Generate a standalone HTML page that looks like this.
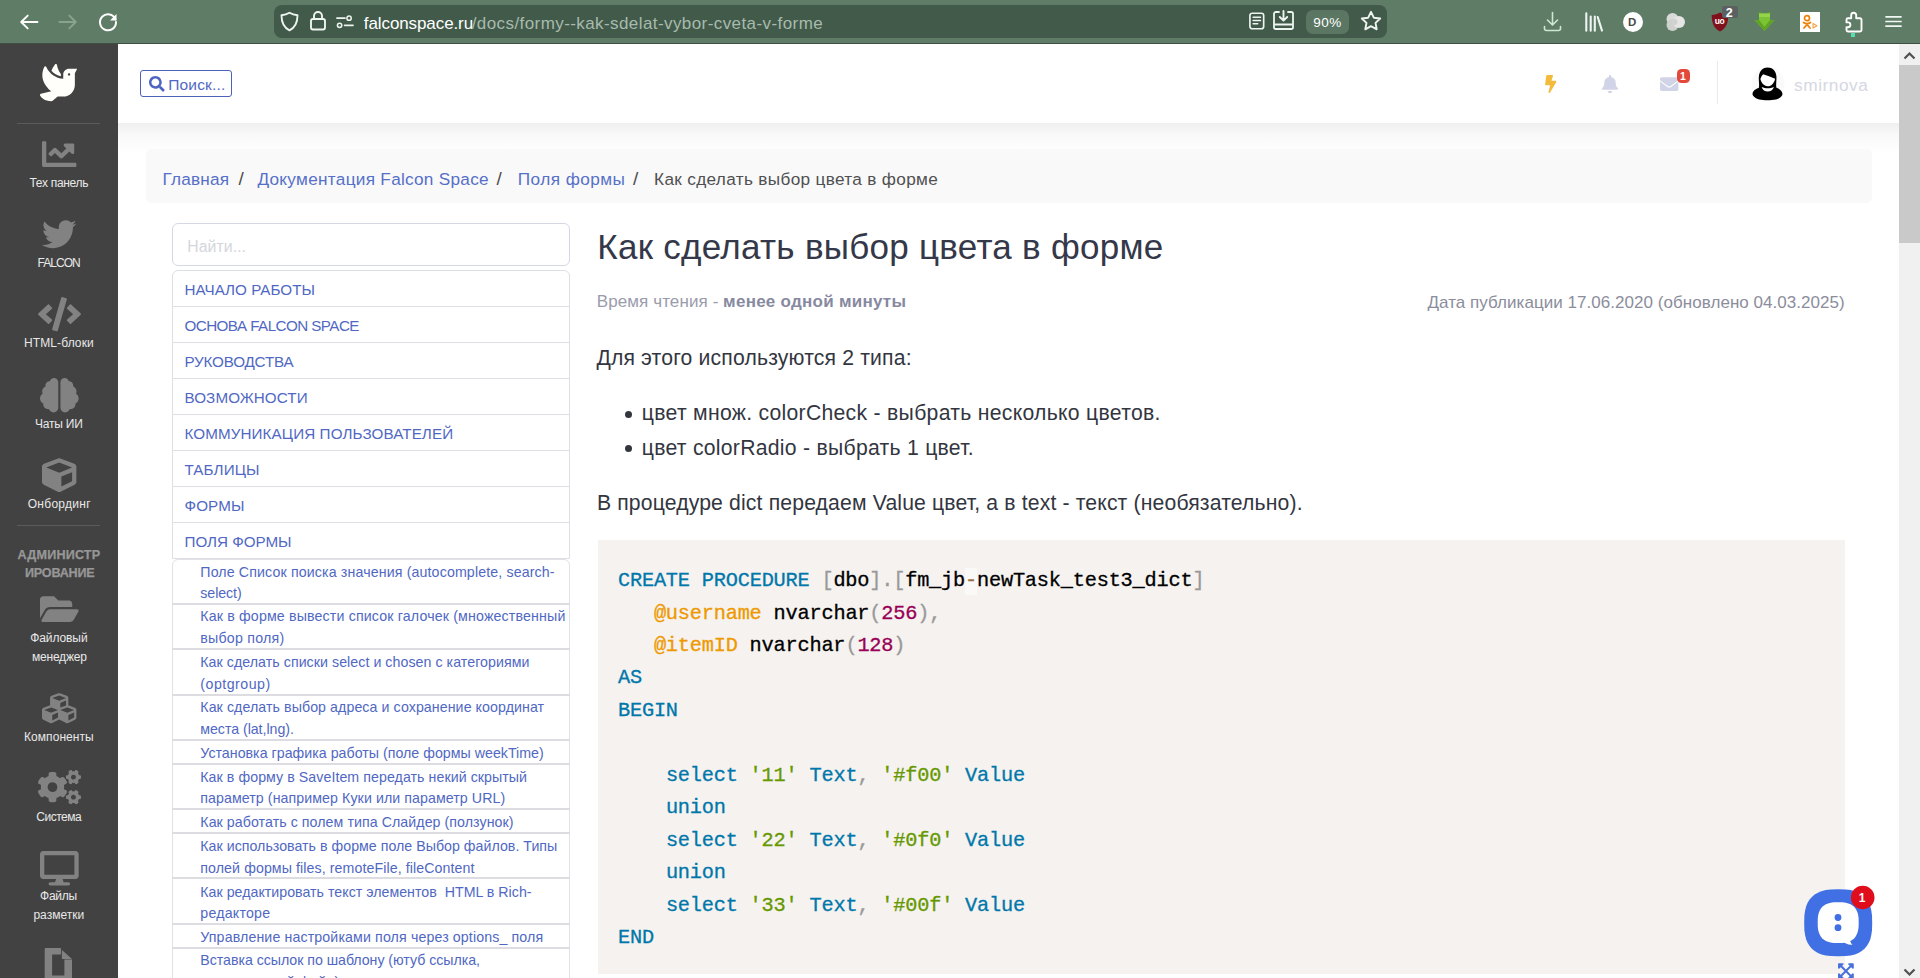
<!DOCTYPE html>
<html lang="ru">
<head>
<meta charset="utf-8">
<title>Как сделать выбор цвета в форме</title>
<style>
*{box-sizing:border-box}
html,body{margin:0;padding:0}
body{width:1920px;height:978px;overflow:hidden;position:relative;background:#fff;
 font-family:"Liberation Sans",sans-serif;color:#333}
.t{position:absolute;white-space:pre;margin:0;padding:0;font-weight:400;text-decoration:none;display:block}
.ic{position:absolute;display:block;overflow:visible}
a{text-decoration:none;color:inherit}
ul,ol,li,h1,p,nav,header,pre,code{margin:0;padding:0;list-style:none;font:inherit}
.abs{position:absolute}
.w{position:static;display:block;margin:0;padding:0}
/* browser chrome */
#chrome{position:absolute;left:0;top:0;width:1920px;height:44px;background:#5e7c66;border-bottom:1px solid #3c4f41}
#urlbar{position:absolute;left:274px;top:5px;width:1113px;height:33px;border-radius:8px;background:#425a4a}
#zoom{position:absolute;left:1306px;top:10px;width:43px;height:24px;border-radius:7px;background:#5b7764}
.url1{color:#fff}.url2{color:#a7bbad}
/* sidebar */
#side{position:absolute;left:0;top:44px;width:118px;height:934px;background:#424242}
.sl{color:#e8e8e8}
.sh{color:#979797;font-weight:700;-webkit-text-stroke:.25px currentColor}
.hr{position:absolute;left:17px;width:83px;height:1px;background:#5b5b5b}
/* top header */
#top{position:absolute;left:118px;top:44px;width:1781px;height:79px;background:#fff}
#topshadow{position:absolute;left:118px;top:123px;width:1781px;height:30px;background:linear-gradient(#efeff0,#f8f8f9 35%,#fff)}
#sbtn{position:absolute;left:140px;top:70px;width:92px;height:27px;border:1px solid #4c62b6;border-radius:3px;background:#fff}
.blue{color:#5068c3}
#vdiv{position:absolute;left:1717px;top:61px;width:1px;height:43px;background:#e9eaef}
#badge{position:absolute;left:1677px;top:69px;width:13px;height:13.500px;border-radius:4.500px;background:#e2493a}
.uname{color:#d5d7e3}
/* scrollbar */
#sb{position:absolute;left:1899px;top:44px;width:21px;height:934px;background:#f0f0f0}
#sbthumb{position:absolute;left:1899px;top:65px;width:21px;height:178px;background:#c9c9c9}
/* breadcrumb */
#bc{position:absolute;left:146px;top:149px;width:1726px;height:54px;border-radius:5px;background:#f9f9fa}
.bcl{color:#5670c7}.bcs{color:#4d4d4d}.bcc{color:#505050}
/* doc menu */
#find{position:absolute;left:172px;top:223px;width:398px;height:43px;border:1px solid #d5d8e3;border-radius:6px;background:#fff}
.ph{color:#d4d6dd}
#menu{position:absolute;left:172px;top:270px;width:398px;height:289px;border:1px solid #dedfe4;border-radius:6px 6px 0 0;background:#fff}
.mi{position:absolute;left:172px;width:398px;height:1px;background:#dedfe4}
#sub{position:absolute;left:172px;top:559px;width:398px;height:430px;border:1px solid #e1e1e6;border-radius:6px 6px 0 0;background:#fff}
.si{position:absolute;left:172px;width:398px;height:2px;background:#dddde1}
/* article */
.h1{color:#343849}
.meta{color:#9a9cab}.metab{color:#8789a0;font-weight:700}.date{color:#8b8d9c}
.p{color:#33363f}
.dot{position:absolute;width:7px;height:7px;border-radius:50%;background:#33363f}
#code{position:absolute;left:597.5px;top:540px;width:1247px;height:434px;background:#f5f2f0}
.c{font-family:"Liberation Mono",monospace;color:#000;-webkit-text-stroke:.3px currentColor}
.k{color:#0077aa}.pn{color:#999}.v{color:#ee9900}.n{color:#990055}.s{color:#669900}.o{color:#9a6e3a;background:rgba(255,255,255,.5)}
</style>
</head>
<body>
<div id="chrome">
<div id="urlbar"></div>
<div id="zoom"></div>
<svg class="ic" style="left:17.500px;top:11.200px" width="22" height="22" viewBox="0 0 22 22"><path d="M19.500 11H3.500M9.700 4.600L3.200 11l6.500 6.400" fill="none" stroke="#fff" stroke-width="1.900" stroke-linecap="round" stroke-linejoin="round"/></svg>
<svg class="ic" style="left:57px;top:11.200px" width="22" height="22" viewBox="0 0 22 22"><path d="M2.500 11h15.500M12.300 4.600l6.500 6.400-6.500 6.400" fill="none" stroke="#8aa390" stroke-width="1.900" stroke-linecap="round" stroke-linejoin="round"/></svg>
<svg class="ic" style="left:97px;top:11px" width="22" height="22" viewBox="0 0 22 22"><path d="M18.500 8.500A8 8 0 1 0 19 11" fill="none" stroke="#fff" stroke-width="2" stroke-linecap="round"/><path d="M19.500 3v6.500H13z" fill="#fff"/></svg>
<svg class="ic" style="left:279px;top:11px" width="21" height="21" viewBox="0 0 21 21"><path d="M10.500 1.800c2.500 1.600 5 2.300 8 2.500 0 7-2.500 12.500-8 15-5.500-2.500-8-8-8-15 3-.2 5.500-.9 8-2.500z" fill="none" stroke="#eef4ef" stroke-width="1.900" stroke-linejoin="round"/></svg>
<svg class="ic" style="left:309px;top:10px" width="18" height="21" viewBox="0 0 18 21"><rect x="2" y="9" width="14" height="10.500" rx="2" fill="none" stroke="#eef4ef" stroke-width="1.900"/><path d="M5 9V6a4 4 0 0 1 8 0v3" fill="none" stroke="#eef4ef" stroke-width="1.900"/></svg>
<svg class="ic" style="left:336px;top:15px" width="18" height="13.500" viewBox="0 0 20 15"><path d="M1 3.500h9M9.500 11.500h9.500" stroke="#eef4ef" stroke-width="1.800" stroke-linecap="round"/><circle cx="14.500" cy="3.500" r="2.400" fill="none" stroke="#eef4ef" stroke-width="1.700"/><circle cx="4" cy="11.500" r="2.400" fill="none" stroke="#eef4ef" stroke-width="1.700"/></svg>
<span class="t url1" style="left:363.8px;top:12.7px;font-size:17px;line-height:22.1px;letter-spacing:-0.094px;">falconspace.ru</span><span class="t url2" style="left:471.7px;top:12.7px;font-size:17px;line-height:22.1px;letter-spacing:0.417px;">/docs/formy--kak-sdelat-vybor-cveta-v-forme</span>
<svg class="ic" style="left:1249px;top:11.500px" width="15.600" height="18" viewBox="0 0 17 19"><rect x="1" y="1" width="15" height="17" rx="2.500" fill="none" stroke="#eef4ef" stroke-width="1.800"/><path d="M4.500 5.500h8M4.500 9h8M4.500 12.500h5" stroke="#eef4ef" stroke-width="1.700" stroke-linecap="round"/></svg>
<svg class="ic" style="left:1273px;top:10px" width="21" height="20" viewBox="0 0 21 20"><path d="M6 2H2.800a1.800 1.800 0 0 0-1.800 1.800v13.400A1.800 1.800 0 0 0 2.800 19h15.400a1.800 1.800 0 0 0 1.800-1.800V3.800A1.800 1.800 0 0 0 18.200 2H15M1.500 14.500h18" fill="none" stroke="#eef4ef" stroke-width="1.800" stroke-linecap="round"/><path d="M10.500 1v9.500M6.800 7l3.700 3.700L14.200 7" fill="none" stroke="#eef4ef" stroke-width="1.900" stroke-linecap="round" stroke-linejoin="round"/></svg>
<span class="t url1" style="left:1313.3px;top:14.0px;font-size:13.5px;line-height:17.6px;letter-spacing:0.449px;">90%</span><svg class="ic" style="left:1360px;top:10px" width="22" height="21" viewBox="0 0 22 21"><path d="M11 1.800l2.800 5.900 6.400.8-4.700 4.400 1.200 6.400L11 16.200l-5.700 3.100 1.200-6.400L1.800 8.500l6.400-.8z" fill="none" stroke="#eef4ef" stroke-width="1.900" stroke-linejoin="round"/></svg>
<svg class="ic" style="left:1543px;top:11px" width="19" height="21" viewBox="0 0 19 21"><path d="M9.500 1.500v12M4.500 9l5 5 5-5M1.500 15.500v2a2 2 0 0 0 2 2h12a2 2 0 0 0 2-2v-2" fill="none" stroke="#cfe6d5" stroke-width="1.600" stroke-linecap="round" stroke-linejoin="round"/></svg>
<svg class="ic" style="left:1584px;top:12px" width="20" height="20" viewBox="0 0 20 20"><path d="M2.300 1.200v17.600M6.700 4.500v14.300M10.800 4.500v14.300M13.700 5l4.300 13.600" fill="none" stroke="#eef4ef" stroke-width="2.100" stroke-linecap="round"/></svg>
<div class="abs" style="left:1623px;top:12px;width:20px;height:20px;border-radius:50%;background:#fff"></div><span class="t" style="left:1628.1px;top:15.0px;font-size:11.5px;line-height:15.0px;color:#4a4a4a;font-weight:700">D</span><svg class="ic" style="left:1665px;top:12px" width="21" height="20" viewBox="0 0 21 20"><circle cx="7.500" cy="7" r="6" fill="#d9dbd9"/><circle cx="7.500" cy="13" r="6" fill="#cfd1cf"/><circle cx="14" cy="10" r="6" fill="#e4e5e4"/><circle cx="9.500" cy="10" r="3" fill="#d0d2d0"/></svg>
<svg class="ic" style="left:1711px;top:12px" width="18" height="20" viewBox="0 0 18 20"><path d="M9 .5c2.500 1.500 5 2.200 8.300 2.500 0 8-2.300 13.500-8.300 16.500C3 16.500.7 11 .7 3 4 2.700 6.500 2 9 .5z" fill="#80101c"/></svg><span class="t" style="left:1714.7px;top:16.3px;font-size:8.5px;line-height:11.1px;color:#fff;font-weight:700;letter-spacing:-0.3px">uo</span><div class="abs" style="left:1722px;top:6px;width:16px;height:12px;border-radius:2px;background:#5b6163"></div><span class="t" style="left:1725.8px;top:5.1px;font-size:12.5px;line-height:16.2px;color:#fff;font-weight:700">2</span>
<svg class="ic" style="left:1754px;top:11px" width="21" height="21" viewBox="0 0 21 21"><path d="M4.500 1h3v2h-3zM13.500 1h3v2h-3z" fill="#5a9a28"/><path d="M5 2.500h11V9h4.500L10.500 20 .5 9H5z" fill="#7cc235"/><path d="M5 2.500h11V6H5z" fill="#94d44a"/><path d="M.5 9H5v0l5.500 7 5.500-7h4.500L10.500 20z" fill="#5fa524"/></svg>
<div class="abs" style="left:1800px;top:12px;width:20px;height:20px;background:#fff"></div><svg class="ic" style="left:1800px;top:12px" width="20" height="20" viewBox="0 0 20 20"><circle cx="7" cy="6.200" r="2.500" fill="none" stroke="#ee8208" stroke-width="1.700"/><path d="M3.500 10.500c2.300 1.700 4.700 1.700 7 0M7 12v1M7 12.500l-3 3.500M7 12.500l3 3.500" fill="none" stroke="#ee8208" stroke-width="1.800" stroke-linecap="round"/><path d="M13 11.500l4 2.300-4 2.300z" fill="none" stroke="#f4a04a" stroke-width="1.100" stroke-linejoin="round"/></svg>
<svg class="ic" style="left:1844px;top:11px" width="19" height="22" viewBox="0 0 19 22"><path d="M7.200 7.200V4.300a2.500 2.500 0 0 1 5 0v2.900H16a1.500 1.500 0 0 1 1.500 1.500V19a1.500 1.500 0 0 1-1.500 1.500H4A1.500 1.500 0 0 1 2.500 19v-2.800H4a2.400 2.400 0 0 0 0-4.800H2.500V8.700A1.500 1.500 0 0 1 4 7.200z" fill="none" stroke="#fff" stroke-width="1.900" stroke-linejoin="round"/></svg><div class="abs" style="left:1850.500px;top:33px;width:4.500px;height:4px;background:#54e0b0"></div>
<svg class="ic" style="left:1885px;top:15px" width="17" height="14" viewBox="0 0 17 14"><path d="M1 1.800h15M1 6.500h15M1 11.200h15" stroke="#f2f7f3" stroke-width="1.700" stroke-linecap="round"/></svg>
</div>
<div id="side"></div>
<nav class="w">
<svg class="ic" style="left:39.6px;top:64px" width="37.2" height="37.2" viewBox="0 0 512 512" ><path fill="#fffefb" d="M288 167.2v-28.1c-28.2-36.300-47.100-79.300-54.100-125.200-2.100-13.500-19-18.800-27.800-8.300-21.100 24.900-37.700 54.100-48.900 86.500 34.200 38.300 80 64.600 130.800 75.100zM400 64c-44.200 0-80 35.900-80 80.100v59.400C215.600 197.300 127 133 87 41.800c-5.500-12.500-23.200-13.200-29-.9C41.400 76 32 115.200 32 156.600c0 70.800 34.100 136.900 85.100 185.900 13.200 12.700 26.100 23.200 38.900 32.800l-143.900 36C1.400 414-3.400 426.400 2.600 435.700 20 462.600 63 508.200 155.800 512c8 .3 16-2.600 22.100-7.900l65.200-56.100H320c88.400 0 160-71.500 160-159.900V128l32-64H400zm0 96.100c-8.800 0-16-7.200-16-16s7.200-16 16-16 16 7.200 16 16-7.200 16-16 16z"/></svg><div class="hr" style="top:123px"></div>
<svg class="ic" style="left:42px;top:137px" width="34.4" height="34.4" viewBox="0 0 512 512" ><path fill="#828282" d="M496 384H64V80c0-8.840-7.160-16-16-16H16C7.160 64 0 71.160 0 80v336c0 17.670 14.330 32 32 32h464c8.840 0 16-7.160 16-16v-32c0-8.840-7.160-16-16-16zM464 96H345.940c-21.380 0-32.090 25.850-16.970 40.970l32.400 32.400L288 242.750l-73.370-73.370c-12.500-12.500-32.760-12.500-45.250 0l-68.690 68.690c-6.250 6.250-6.250 16.380 0 22.630l22.620 22.620c6.250 6.250 16.380 6.250 22.630 0L192 237.250l73.370 73.370c12.500 12.500 32.760 12.500 45.250 0l96-96 32.400 32.400c15.120 15.120 40.970 4.410 40.970-16.970V112c.010-8.840-7.150-16-15.990-16z"/></svg>
<a class="t sl" style="left:29.5px;top:175.9px;font-size:12px;line-height:15.6px;letter-spacing:-0.303px;">Тех панель</a><svg class="ic" style="left:41.5px;top:217px" width="34.4" height="34.4" viewBox="0 0 512 512" ><path fill="#828282" d="M459.37 151.716c.325 4.548.325 9.097.325 13.645 0 138.720-105.583 298.558-298.558 298.558-59.452 0-114.680-17.219-161.137-47.106 8.447.974 16.568 1.299 25.340 1.299 49.055 0 94.213-16.568 130.274-44.832-46.132-.975-84.792-31.188-98.112-72.772 6.498.974 12.995 1.624 19.818 1.624 9.421 0 18.843-1.300 27.614-3.573-48.081-9.747-84.143-51.980-84.143-102.985v-1.299c13.969 7.797 30.214 12.670 47.431 13.319-28.264-18.843-46.781-51.005-46.781-87.391 0-19.492 5.197-37.360 14.294-52.954 51.655 63.675 129.300 105.258 216.365 109.807-1.624-7.797-2.599-15.918-2.599-24.040 0-57.828 46.782-104.934 104.934-104.934 30.213 0 57.502 12.670 76.670 33.137 23.715-4.548 46.456-13.320 66.599-25.340-7.798 24.366-24.366 44.833-46.132 57.827 21.117-2.273 41.584-8.122 60.426-16.243-14.292 20.791-32.161 39.308-52.628 54.253z"/></svg>
<a class="t sl" style="left:37.5px;top:256.2px;font-size:12px;line-height:15.6px;letter-spacing:-0.956px;">FALCON</a><svg class="ic" style="left:37.5px;top:297.2px" width="43" height="34.4" viewBox="0 0 640 512" ><path fill="#828282" d="M278.900 511.500l-61-17.700c-6.400-1.800-10-8.500-8.200-14.900L346.200 8.700c1.800-6.400 8.500-10 14.900-8.200l61 17.700c6.400 1.800 10 8.500 8.200 14.900L293.800 503.300c-1.900 6.400-8.500 10.100-14.900 8.200zm-114-112.200l43.500-46.400c4.600-4.900 4.300-12.700-.8-17.200L117 256l90.600-79.700c5.100-4.500 5.500-12.300.8-17.200l-43.500-46.400c-4.500-4.800-12.100-5.100-17-.5L3.800 247.200c-5.100 4.700-5.100 12.800 0 17.500l144.100 135.100c4.900 4.600 12.500 4.400 17-.5zm327.200.6l144.100-135.100c5.100-4.700 5.100-12.800 0-17.500L492.100 112.100c-4.800-4.500-12.400-4.300-17 .5L431.600 159c-4.600 4.900-4.300 12.700.8 17.200L523 256l-90.600 79.700c-5.100 4.500-5.500 12.300-.8 17.200l43.500 46.400c4.500 4.900 12.100 5.100 17 .6z"/></svg>
<a class="t sl" style="left:24.0px;top:336.2px;font-size:12px;line-height:15.6px;letter-spacing:0.105px;">HTML-блоки</a><svg class="ic" style="left:40.2px;top:378px" width="38.7" height="34.4" viewBox="0 0 576 512" ><path fill="#828282" d="M208 0c-29.900 0-54.700 20.500-61.800 48.200-.8 0-1.400-.2-2.200-.2-35.300 0-64 28.700-64 64 0 4.800.6 9.500 1.700 14C52.500 138 32 166.600 32 200c0 12.600 3.200 24.300 8.300 34.900C16.300 248.700 0 274.300 0 304c0 33.300 20.400 61.900 49.400 73.900-.9 4.600-1.400 9.300-1.400 14.100 0 39.800 32.200 72 72 72 4.100 0 8.100-.5 12-1.200 9.600 28.500 36.200 49.200 68 49.200 39.800 0 72-32.200 72-72V64c0-35.300-28.700-64-64-64zm368 304c0-29.700-16.300-55.300-40.300-69.100 5.200-10.600 8.300-22.300 8.300-34.900 0-33.400-20.500-62-49.700-74 1-4.500 1.700-9.200 1.700-14 0-35.300-28.700-64-64-64-.8 0-1.500.2-2.200.2C422.700 20.500 397.900 0 368 0c-35.300 0-64 28.600-64 64v376c0 39.800 32.200 72 72 72 31.800 0 58.400-20.700 68-49.200 3.900.7 7.900 1.200 12 1.200 39.800 0 72-32.200 72-72 0-4.800-.5-9.500-1.400-14.100 29-12 49.400-40.600 49.400-73.900z"/></svg>
<a class="t sl" style="left:35.1px;top:417.2px;font-size:12px;line-height:15.6px;letter-spacing:-0.241px;">Чаты ИИ</a><svg class="ic" style="left:42px;top:457.5px" width="34.4" height="34.4" viewBox="0 0 512 512" ><path fill="#828282" d="M239.100 6.300l-208 78c-18.700 7-31.100 25-31.100 45v225.100c0 18.200 10.300 34.800 26.500 42.900l208 104c13.500 6.800 29.400 6.800 42.900 0l208-104c16.300-8.100 26.500-24.800 26.500-42.900V129.300c0-20-12.400-37.900-31.100-44.900l-208-78C262 2.200 250 2.200 239.100 6.300zM256 68.400l192 72v1.100l-192 78-192-78v-1.100l192-72zm32 356V275.500l160-65v133.900l-160 80z"/></svg>
<a class="t sl" style="left:27.7px;top:496.9px;font-size:12px;line-height:15.6px;letter-spacing:0.286px;">Онбординг</a><div class="hr" style="top:525px"></div>
<span class="t sh" style="left:17.6px;top:546.6px;font-size:12.6px;line-height:16.4px;letter-spacing:0.180px;">АДМИНИСТР</span><span class="t sh" style="left:25.0px;top:564.6px;font-size:12.6px;line-height:16.4px;letter-spacing:-0.222px;">ИРОВАНИЕ</span><svg class="ic" style="left:39.8px;top:592.3px" width="38.7" height="34.4" viewBox="0 0 576 512" ><path fill="#828282" d="M572.694 292.093L500.270 416.248A63.997 63.997 0 0 1 444.989 448H45.025c-18.523 0-30.064-20.093-20.731-36.093l72.424-124.155A64 64 0 0 1 152 256h399.964c18.523 0 30.064 20.093 20.730 36.093zM152 224h328v-48c0-26.510-21.490-48-48-48H272l-64-64H48C21.490 64 0 85.490 0 112v278.046l69.077-118.418C86.214 242.250 117.989 224 152 224z"/></svg>
<a class="t sl" style="left:30.2px;top:631.4px;font-size:12px;line-height:15.6px;letter-spacing:-0.087px;">Файловый</a><a class="t sl" style="left:31.9px;top:649.8px;font-size:12px;line-height:15.6px;letter-spacing:-0.185px;">менеджер</a><svg class="ic" style="left:41.8px;top:690.5px" width="34.4" height="34.4" viewBox="0 0 512 512" ><path fill="#828282" d="M488.600 250.200L392 214V105.500c0-15-9.300-28.400-23.400-33.700l-100-37.500c-8.100-3.100-17.100-3.100-25.300 0l-100 37.500c-14.100 5.300-23.400 18.700-23.400 33.700V214l-96.600 36.200C9.300 255.500 0 268.900 0 283.900V394c0 13.600 7.700 26.100 19.900 32.200l100 50c10.100 5.100 22.100 5.100 32.200 0l103.900-52 103.900 52c10.100 5.100 22.100 5.100 32.200 0l100-50c12.200-6.100 19.900-18.600 19.900-32.200V283.900c0-15-9.300-28.400-23.400-33.700zM358 214.800l-85 31.900v-68.200l85-37v73.300zM154 104.100l102-38.200 102 38.200v.6l-102 41.400-102-41.400v-.6zm84 291.100l-85 42.500v-79.100l85-38.800v75.400zm0-112l-102 41.400-102-41.400v-.6l102-38.200 102 38.200v.6zm240 112l-85 42.500v-79.100l85-38.800v75.400zm0-112l-102 41.400-102-41.400v-.6l102-38.200 102 38.200v.6z"/></svg>
<a class="t sl" style="left:24.0px;top:729.6px;font-size:12px;line-height:15.6px;letter-spacing:0.065px;">Компоненты</a><svg class="ic" style="left:37.5px;top:770px" width="43" height="34.4" viewBox="0 0 640 512" ><path fill="#828282" d="M512.100 191l-8.200 14.300c-3 5.300-9.400 7.500-15.100 5.400-11.800-4.400-22.600-10.700-32.100-18.600-4.600-3.800-5.800-10.500-2.800-15.700l8.200-14.300c-6.900-8-12.300-17.300-15.900-27.400h-16.500c-6 0-11.200-4.300-12.200-10.300-2-12-2.100-24.600 0-37.100 1-6 6.200-10.400 12.200-10.400h16.500c3.600-10.100 9-19.400 15.900-27.400l-8.200-14.300c-3-5.200-1.900-11.900 2.800-15.700 9.500-7.900 20.400-14.200 32.100-18.600 5.700-2.100 12.100.1 15.100 5.400l8.200 14.300c10.500-1.900 21.200-1.900 31.700 0L552 6.300c3-5.300 9.400-7.500 15.100-5.400 11.800 4.400 22.600 10.700 32.100 18.600 4.600 3.800 5.800 10.500 2.800 15.700l-8.200 14.300c6.900 8 12.300 17.300 15.900 27.400h16.500c6 0 11.200 4.300 12.200 10.300 2 12 2.100 24.600 0 37.100-1 6-6.200 10.400-12.200 10.400h-16.500c-3.600 10.100-9 19.400-15.900 27.400l8.200 14.300c3 5.200 1.900 11.900-2.800 15.700-9.500 7.900-20.400 14.200-32.100 18.600-5.700 2.100-12.100-.1-15.100-5.400l-8.200-14.300c-10.400 1.900-21.200 1.900-31.700 0zm-10.500-58.800c38.500 29.600 82.400-14.300 52.800-52.800-38.500-29.700-82.400 14.300-52.800 52.800zM386.300 286.100l33.700 16.800c10.100 5.800 14.500 18.100 10.500 29.100-8.900 24.200-26.400 46.400-42.600 65.800-7.400 8.900-20.200 11.100-30.300 5.300l-29.100-16.800c-16 13.700-34.600 24.600-54.900 31.700v33.600c0 11.600-8.300 21.600-19.700 23.600-24.600 4.200-50.400 4.400-75.900 0-11.500-2-20-11.900-20-23.600V418c-20.300-7.200-38.900-18-54.900-31.700L74 403c-10 5.800-22.900 3.600-30.300-5.300-16.200-19.400-33.300-41.600-42.200-65.700-4-10.900.4-23.200 10.500-29.100l33.300-16.800c-3.900-20.900-3.900-42.400 0-63.400L12 205.800c-10.100-5.800-14.600-18.100-10.500-29 8.900-24.200 26-46.400 42.200-65.800 7.400-8.900 20.200-11.100 30.300-5.300l29.100 16.800c16-13.700 34.600-24.600 54.900-31.700V57.100c0-11.500 8.200-21.500 19.600-23.500 24.600-4.200 50.500-4.400 76-.1 11.500 2 20 11.900 20 23.600v33.600c20.300 7.200 38.900 18 54.900 31.700l29.100-16.800c10-5.800 22.900-3.600 30.300 5.300 16.200 19.400 33.200 41.600 42.100 65.800 4 10.900.1 23.200-10 29.100l-33.700 16.800c3.900 21 3.900 42.500 0 63.500zm-117.600 21.100c59.200-77-28.700-164.900-105.700-105.700-59.200 77 28.700 164.900 105.700 105.700zm243.400 182.700l-8.200 14.300c-3 5.300-9.400 7.500-15.100 5.400-11.800-4.400-22.600-10.700-32.100-18.600-4.600-3.800-5.800-10.500-2.800-15.700l8.200-14.300c-6.900-8-12.300-17.300-15.900-27.400h-16.500c-6 0-11.200-4.300-12.200-10.300-2-12-2.100-24.600 0-37.100 1-6 6.200-10.400 12.200-10.400h16.500c3.600-10.100 9-19.400 15.900-27.400l-8.200-14.300c-3-5.200-1.900-11.900 2.800-15.700 9.500-7.900 20.400-14.200 32.100-18.600 5.700-2.100 12.100.1 15.100 5.400l8.200 14.300c10.500-1.900 21.200-1.900 31.700 0l8.200-14.300c3-5.300 9.400-7.500 15.100-5.400 11.800 4.400 22.600 10.700 32.100 18.600 4.600 3.800 5.800 10.500 2.800 15.700l-8.200 14.300c6.900 8 12.300 17.300 15.900 27.400h16.500c6 0 11.200 4.300 12.200 10.300 2 12 2.100 24.600 0 37.100-1 6-6.200 10.400-12.200 10.400h-16.500c-3.600 10.100-9 19.400-15.900 27.400l8.200 14.300c3 5.200 1.900 11.900-2.800 15.700-9.500 7.900-20.400 14.200-32.100 18.600-5.700 2.100-12.100-.1-15.100-5.400l-8.200-14.300c-10.400 1.900-21.200 1.900-31.700 0zM501.600 431c38.500 29.600 82.400-14.300 52.800-52.800-38.500-29.600-82.400 14.300-52.800 52.800z"/></svg>
<a class="t sl" style="left:36.3px;top:809.6px;font-size:12px;line-height:15.6px;letter-spacing:-0.487px;">Система</a><svg class="ic" style="left:40px;top:851px" width="38.7" height="34.4" viewBox="0 0 576 512" ><path fill="#828282" d="M528 0H48C21.500 0 0 21.500 0 48v320c0 26.500 21.500 48 48 48h192l-16 48h-72c-13.300 0-24 10.700-24 24s10.700 24 24 24h272c13.300 0 24-10.700 24-24s-10.700-24-24-24h-72l-16-48h192c26.500 0 48-21.500 48-48V48c0-26.500-21.500-48-48-48zm-16 352H64V64h448v288z"/></svg>
<a class="t sl" style="left:40.0px;top:889.4px;font-size:12px;line-height:15.6px;letter-spacing:-0.240px;">Файлы</a><a class="t sl" style="left:33.4px;top:907.8px;font-size:12px;line-height:15.6px;letter-spacing:0.034px;">разметки</a><svg class="ic" style="left:44px;top:947px" width="30" height="31" viewBox="0 0 30 31"><path fill="#828282" d="M1.700 .9H16.200q.8 0 .8 .8V7.500H8.100V28.600H20.400V12.600H28V31H.7V1.900q0-1 1-1zM17.900 3.100L28 12H17.900z"/></svg>
</nav>
<div id="top"></div>
<div id="topshadow"></div>
<header class="w">
<div id="sbtn"></div><svg class="ic" style="left:148.5px;top:76px" width="15.7" height="15.7" viewBox="0 0 512 512" ><path fill="#4d65c1" d="M505 442.700L405.300 343c-4.500-4.500-10.600-7-17-7H372c27.600-35.300 44-79.700 44-128C416 93.100 322.900 0 208 0S0 93.100 0 208s93.100 208 208 208c48.300 0 92.700-16.400 128-44v16.300c0 6.400 2.500 12.500 7 17l99.700 99.700c9.400 9.400 24.600 9.400 33.900 0l28.300-28.300c9.400-9.400 9.400-24.600.1-34zM208 336c-70.700 0-128-57.200-128-128 0-70.700 57.200-128 128-128 70.700 0 128 57.200 128 128 0 70.700-57.200 128-128 128z"/></svg><a class="t blue" style="left:168.3px;top:74.7px;font-size:15.5px;line-height:20.2px;letter-spacing:0.152px;">Поиск...</a>
<svg class="ic" style="left:1545.3px;top:75.3px" width="11.5" height="18" viewBox="0 0 320 512" ><path fill="#f2bb3c" d="M296 160H180.600l42.600-129.800C227.200 15 215.700 0 200 0H56C44 0 33.800 8.900 32.200 20.800l-32 240C-1.700 275.200 9.500 288 24 288h118.700L96.600 482.500c-3.600 15.200 8 29.500 23.300 29.500 8.400 0 16.400-4.400 20.800-12l176-304c9.300-15.900-2.200-36-20.700-36z"/></svg><svg class="ic" style="left:1602.3px;top:75px" width="16" height="18.3" viewBox="0 0 448 512" ><path fill="#d1d4e6" d="M224 512c35.320 0 63.970-28.650 63.970-64H160.030c0 35.350 28.650 64 63.970 64zm215.390-149.710c-19.320-20.760-55.470-51.990-55.470-154.290 0-77.700-54.480-139.900-127.940-155.160V32c0-17.670-14.320-32-31.980-32s-31.980 14.330-31.980 32v20.840C118.560 68.100 64.080 130.300 64.080 208c0 102.300-36.150 133.530-55.470 154.290-6 6.450-8.660 14.160-8.610 21.710.11 16.400 12.980 32 32.100 32h383.800c19.120 0 32-15.600 32.100-32 .05-7.550-2.610-15.270-8.610-21.710z"/></svg><svg class="ic" style="left:1660px;top:75px" width="18.4" height="18.4" viewBox="0 0 512 512" ><path fill="#d1d4e6" d="M502.300 190.800c3.900-3.100 9.700-.2 9.700 4.700V400c0 26.500-21.500 48-48 48H48c-26.500 0-48-21.500-48-48V195.600c0-5 5.700-7.800 9.700-4.700 22.400 17.400 52.100 39.500 154.100 113.600 21.100 15.400 56.700 47.800 92.200 47.600 35.700.3 72-32.800 92.300-47.600 102-74.100 131.600-96.300 154-113.700zM256 320c23.200.4 56.600-29.200 73.400-41.400 132.700-96.300 142.800-104.700 173.400-128.700 5.800-4.500 9.200-11.500 9.200-18.900v-19c0-26.500-21.500-48-48-48H48C21.500 64 0 85.500 0 112v19c0 7.400 3.400 14.300 9.200 18.900 30.600 23.900 40.700 32.400 173.400 128.700 16.800 12.200 50.200 41.800 73.400 41.400z"/></svg><div id="badge"></div><span class="t" style="left:1679.9px;top:69.5px;font-size:10.5px;line-height:13.7px;color:#fff;font-weight:700">1</span><div id="vdiv"></div>
<svg class="ic" style="left:1751px;top:66px" width="35" height="35" viewBox="0 0 35 35"><circle cx="17" cy="17.500" r="16.500" fill="#fafafb"/><path d="M7.900 23C8.600 18 7.400 13.500 7.900 10 8.500 4.500 12 1.400 16.700 1.400S24.900 4.500 25.400 10C25.800 13.500 24.700 18 25.400 23z" fill="#000"/><path d="M1.500 28c.3-3.800 4.500-6 9-6.700H23c4.500.7 8.200 2.900 8.500 6.700 0 2.200-2.500 4.200-6.500 5.500-5 .9-12 .9-16.800 0-4-1.300-6.700-3.300-6.700-5.500z" fill="#000"/><path d="M12.100 8.200c3.900 1.300 7.900 2.800 12 4.500-.6 3.800-3.600 7.600-7.400 7.600-3.700 0-6.700-3.800-7.300-7.200.6-2.100 1.600-3.800 2.700-4.900z" fill="#fff"/><path d="M10.600 21c1.900.9 3.900 1.200 6.100 1.200 2.300 0 4.300-.3 6.200-1.200-.9 2.900-3.400 4.600-6.200 4.600-2.700 0-5.200-1.700-6.100-4.600z" fill="#fff"/></svg><span class="t uname" style="left:1794.1px;top:73.9px;font-size:17.3px;line-height:22.5px;letter-spacing:0.525px;">smirnova</span>
</header>
<div id="sb"></div><div id="sbthumb"></div><svg class="ic" style="left:1903px;top:51px" width="13" height="9" viewBox="0 0 13 9"><path d="M1.500 7.500l5-5 5 5" fill="none" stroke="#505050" stroke-width="2.200"/></svg><svg class="ic" style="left:1903px;top:968px" width="13" height="9" viewBox="0 0 13 9"><path d="M1.500 1.500l5 5 5-5" fill="none" stroke="#505050" stroke-width="2.200"/></svg>
<div id="bc"></div>
<nav class="w">
<a class="t bcl" style="left:162.4px;top:167.8px;font-size:17.2px;line-height:22.4px;letter-spacing:0.218px;">Главная</a><span class="t bcs" style="left:238.4px;top:167.1px;font-size:19px;line-height:24.7px;">/</span><a class="t bcl" style="left:257.4px;top:167.8px;font-size:17.2px;line-height:22.4px;letter-spacing:0.293px;">Документация Falcon Space</a><span class="t bcs" style="left:496.6px;top:167.1px;font-size:19px;line-height:24.7px;">/</span><a class="t bcl" style="left:517.8px;top:167.8px;font-size:17.2px;line-height:22.4px;letter-spacing:0.438px;">Поля формы</a><span class="t bcs" style="left:632.9px;top:167.1px;font-size:19px;line-height:24.7px;">/</span><span class="t bcc" style="left:654.1px;top:167.8px;font-size:17.2px;line-height:22.4px;letter-spacing:0.328px;">Как сделать выбор цвета в форме</span>
</nav>
<aside class="w">
<div id="find"></div><span class="t ph" style="left:187.2px;top:236.6px;font-size:15.8px;line-height:20.5px;letter-spacing:0.081px;">Найти...</span>
<div id="menu"></div>
<a class="t blue" style="left:184.5px;top:279.6px;font-size:15.2px;line-height:19.8px;letter-spacing:0.032px;">НАЧАЛО РАБОТЫ</a>
<div class="mi" style="top:306px"></div><a class="t blue" style="left:184.5px;top:315.6px;font-size:15.2px;line-height:19.8px;letter-spacing:-0.552px;">ОСНОВА FALCON SPACE</a>
<div class="mi" style="top:342px"></div><a class="t blue" style="left:184.5px;top:351.6px;font-size:15.2px;line-height:19.8px;letter-spacing:-0.176px;">РУКОВОДСТВА</a>
<div class="mi" style="top:378px"></div><a class="t blue" style="left:184.5px;top:387.6px;font-size:15.2px;line-height:19.8px;letter-spacing:0.091px;">ВОЗМОЖНОСТИ</a>
<div class="mi" style="top:414px"></div><a class="t blue" style="left:184.5px;top:423.6px;font-size:15.2px;line-height:19.8px;letter-spacing:0.114px;">КОММУНИКАЦИЯ ПОЛЬЗОВАТЕЛЕЙ</a>
<div class="mi" style="top:450px"></div><a class="t blue" style="left:184.5px;top:459.6px;font-size:15.2px;line-height:19.8px;letter-spacing:0.083px;">ТАБЛИЦЫ</a>
<div class="mi" style="top:486px"></div><a class="t blue" style="left:184.5px;top:495.6px;font-size:15.2px;line-height:19.8px;letter-spacing:0.123px;">ФОРМЫ</a>
<div class="mi" style="top:522px"></div><a class="t blue" style="left:184.5px;top:531.6px;font-size:15.2px;line-height:19.8px;letter-spacing:-0.007px;">ПОЛЯ ФОРМЫ</a>
<div id="sub"></div>
<a class="t blue" style="left:200.3px;top:562.5px;font-size:14.2px;line-height:18.5px;letter-spacing:0.135px;">Поле Список поиска значения (autocomplete, search-</a><a class="t blue" style="left:200.3px;top:584.3px;font-size:14.2px;line-height:18.5px;letter-spacing:-0.069px;">select)</a>
<div class="si" style="top:603.2px"></div><a class="t blue" style="left:200.3px;top:607.1px;font-size:14.2px;line-height:18.5px;letter-spacing:0.156px;">Как в форме вывести список галочек (множественный</a><a class="t blue" style="left:200.3px;top:629.3px;font-size:14.2px;line-height:18.5px;letter-spacing:0.230px;">выбор поля)</a>
<div class="si" style="top:648.4px"></div><a class="t blue" style="left:200.3px;top:653.0px;font-size:14.2px;line-height:18.5px;letter-spacing:0.055px;">Как сделать списки select и chosen с категориями</a><a class="t blue" style="left:200.3px;top:674.7px;font-size:14.2px;line-height:18.5px;letter-spacing:0.492px;">(optgroup)</a>
<div class="si" style="top:693.8px"></div><a class="t blue" style="left:200.3px;top:698.1px;font-size:14.2px;line-height:18.5px;letter-spacing:0.080px;">Как сделать выбор адреса и сохранение координат</a><a class="t blue" style="left:200.3px;top:719.9px;font-size:14.2px;line-height:18.5px;letter-spacing:-0.040px;">места (lat,lng).</a>
<div class="si" style="top:739.0px"></div><a class="t blue" style="left:200.3px;top:743.9px;font-size:14.2px;line-height:18.5px;letter-spacing:0.025px;">Установка графика работы (поле формы weekTime)</a>
<div class="si" style="top:762.8px"></div><a class="t blue" style="left:200.3px;top:768.0px;font-size:14.2px;line-height:18.5px;letter-spacing:0.062px;">Как в форму в SaveItem передать некий скрытый</a><a class="t blue" style="left:200.3px;top:789.3px;font-size:14.2px;line-height:18.5px;letter-spacing:0.079px;">параметр (например Куки или параметр URL)</a>
<div class="si" style="top:808.2px"></div><a class="t blue" style="left:200.3px;top:813.1px;font-size:14.2px;line-height:18.5px;letter-spacing:0.067px;">Как работать с полем типа Слайдер (ползунок)</a>
<div class="si" style="top:831.5px"></div><a class="t blue" style="left:200.3px;top:837.2px;font-size:14.2px;line-height:18.5px;letter-spacing:0.025px;">Как использовать в форме поле Выбор файлов. Типы</a><a class="t blue" style="left:200.3px;top:859.3px;font-size:14.2px;line-height:18.5px;letter-spacing:0.091px;">полей формы files, remoteFile, fileContent</a>
<div class="si" style="top:876.9px"></div><a class="t blue" style="left:200.3px;top:882.6px;font-size:14.2px;line-height:18.5px;letter-spacing:0.021px;">Как редактировать текст элементов  HTML в Rich-</a><a class="t blue" style="left:200.3px;top:903.9px;font-size:14.2px;line-height:18.5px;letter-spacing:0.215px;">редакторе</a>
<div class="si" style="top:922.8px"></div><a class="t blue" style="left:200.3px;top:928.0px;font-size:14.2px;line-height:18.5px;letter-spacing:0.127px;">Управление настройками поля через options_ поля</a>
<div class="si" style="top:946.8px"></div><a class="t blue" style="left:200.3px;top:951.3px;font-size:14.2px;line-height:18.5px;letter-spacing:-0.037px;">Вставка ссылок по шаблону (ютуб ссылка,</a><a class="t blue" style="left:200.3px;top:972.9px;font-size:14.2px;line-height:18.5px;">произвольный файл)</a>
</aside>
<article class="w">
<h1 class="t h1" style="left:597.3px;top:224.4px;font-size:35px;line-height:45.5px;letter-spacing:0.280px;">Как сделать выбор цвета в форме</h1>
<span class="t meta" style="left:596.7px;top:291.4px;font-size:17px;line-height:22.1px;letter-spacing:0.108px;">Время чтения -</span><b class="t metab" style="left:723.1px;top:291.4px;font-size:17px;line-height:22.1px;letter-spacing:0.257px;">менее одной минуты</b><span class="t date" style="left:1427.5px;top:291.6px;font-size:17px;line-height:22.1px;letter-spacing:0.043px;">Дата публикации 17.06.2020 (обновлено 04.03.2025)</span>
<p class="t p" style="left:596.4px;top:343.8px;font-size:21.2px;line-height:27.6px;letter-spacing:0.161px;">Для этого используются 2 типа:</p>
<div class="dot" style="left:624.6px;top:410.6px"></div><p class="t p" style="left:641.8px;top:399.3px;font-size:21.2px;line-height:27.6px;letter-spacing:0.287px;">цвет множ. colorCheck - выбрать несколько цветов.</p>
<div class="dot" style="left:624.6px;top:444.6px"></div><p class="t p" style="left:641.8px;top:433.8px;font-size:21.2px;line-height:27.6px;letter-spacing:0.265px;">цвет colorRadio - выбрать 1 цвет.</p>
<p class="t p" style="left:596.9px;top:488.9px;font-size:21.2px;line-height:27.6px;letter-spacing:0.145px;">В процедуре dict передаем Value цвет, а в text - текст (необязательно).</p>
<div id="code"></div>
<code class="t c k" style="left:618.0px;top:568.1px;font-size:20.3px;line-height:26.4px;letter-spacing:-0.204px;">CREATE</code><code class="t c k" style="left:701.8px;top:568.1px;font-size:20.3px;line-height:26.4px;letter-spacing:-0.204px;">PROCEDURE</code><code class="t c pn" style="left:821.5px;top:568.1px;font-size:20.3px;line-height:26.4px;letter-spacing:-0.204px;">[</code><code class="t c " style="left:833.4px;top:568.1px;font-size:20.3px;line-height:26.4px;letter-spacing:-0.204px;">dbo</code><code class="t c pn" style="left:869.3px;top:568.1px;font-size:20.3px;line-height:26.4px;letter-spacing:-0.204px;">]</code><code class="t c pn" style="left:881.3px;top:568.1px;font-size:20.3px;line-height:26.4px;letter-spacing:-0.204px;">.</code><code class="t c pn" style="left:893.3px;top:568.1px;font-size:20.3px;line-height:26.4px;letter-spacing:-0.204px;">[</code><code class="t c " style="left:905.2px;top:568.1px;font-size:20.3px;line-height:26.4px;letter-spacing:-0.204px;">fm_jb</code><code class="t c o" style="left:965.1px;top:568.1px;font-size:20.3px;line-height:26.4px;letter-spacing:-0.204px;">-</code><code class="t c " style="left:977.0px;top:568.1px;font-size:20.3px;line-height:26.4px;letter-spacing:-0.203px;">newTask_test3_dict</code><code class="t c pn" style="left:1192.5px;top:568.1px;font-size:20.3px;line-height:26.4px;letter-spacing:-0.204px;">]</code>
<code class="t c v" style="left:653.9px;top:600.5px;font-size:20.3px;line-height:26.4px;letter-spacing:-0.204px;">@username</code><code class="t c " style="left:773.6px;top:600.5px;font-size:20.3px;line-height:26.4px;letter-spacing:-0.204px;">nvarchar</code><code class="t c pn" style="left:869.3px;top:600.5px;font-size:20.3px;line-height:26.4px;letter-spacing:-0.204px;">(</code><code class="t c n" style="left:881.3px;top:600.5px;font-size:20.3px;line-height:26.4px;letter-spacing:-0.204px;">256</code><code class="t c pn" style="left:917.2px;top:600.5px;font-size:20.3px;line-height:26.4px;letter-spacing:-0.204px;">)</code><code class="t c pn" style="left:929.2px;top:600.5px;font-size:20.3px;line-height:26.4px;letter-spacing:-0.204px;">,</code>
<code class="t c v" style="left:653.9px;top:633.0px;font-size:20.3px;line-height:26.4px;letter-spacing:-0.204px;">@itemID</code><code class="t c " style="left:749.6px;top:633.0px;font-size:20.3px;line-height:26.4px;letter-spacing:-0.204px;">nvarchar</code><code class="t c pn" style="left:845.4px;top:633.0px;font-size:20.3px;line-height:26.4px;letter-spacing:-0.204px;">(</code><code class="t c n" style="left:857.4px;top:633.0px;font-size:20.3px;line-height:26.4px;letter-spacing:-0.204px;">128</code><code class="t c pn" style="left:893.3px;top:633.0px;font-size:20.3px;line-height:26.4px;letter-spacing:-0.204px;">)</code>
<code class="t c k" style="left:618.0px;top:665.4px;font-size:20.3px;line-height:26.4px;letter-spacing:-0.204px;">AS</code>
<code class="t c k" style="left:618.0px;top:697.9px;font-size:20.3px;line-height:26.4px;letter-spacing:-0.204px;">BEGIN</code>
<code class="t c k" style="left:665.9px;top:762.8px;font-size:20.3px;line-height:26.4px;letter-spacing:-0.204px;">select</code><code class="t c s" style="left:749.6px;top:762.8px;font-size:20.3px;line-height:26.4px;letter-spacing:-0.204px;">'11'</code><code class="t c k" style="left:809.5px;top:762.8px;font-size:20.3px;line-height:26.4px;letter-spacing:-0.204px;">Text</code><code class="t c pn" style="left:857.4px;top:762.8px;font-size:20.3px;line-height:26.4px;letter-spacing:-0.204px;">,</code><code class="t c s" style="left:881.3px;top:762.8px;font-size:20.3px;line-height:26.4px;letter-spacing:-0.204px;">'#f00'</code><code class="t c k" style="left:965.1px;top:762.8px;font-size:20.3px;line-height:26.4px;letter-spacing:-0.204px;">Value</code>
<code class="t c k" style="left:665.9px;top:795.2px;font-size:20.3px;line-height:26.4px;letter-spacing:-0.204px;">union</code>
<code class="t c k" style="left:665.9px;top:827.7px;font-size:20.3px;line-height:26.4px;letter-spacing:-0.204px;">select</code><code class="t c s" style="left:749.6px;top:827.7px;font-size:20.3px;line-height:26.4px;letter-spacing:-0.204px;">'22'</code><code class="t c k" style="left:809.5px;top:827.7px;font-size:20.3px;line-height:26.4px;letter-spacing:-0.204px;">Text</code><code class="t c pn" style="left:857.4px;top:827.7px;font-size:20.3px;line-height:26.4px;letter-spacing:-0.204px;">,</code><code class="t c s" style="left:881.3px;top:827.7px;font-size:20.3px;line-height:26.4px;letter-spacing:-0.204px;">'#0f0'</code><code class="t c k" style="left:965.1px;top:827.7px;font-size:20.3px;line-height:26.4px;letter-spacing:-0.204px;">Value</code>
<code class="t c k" style="left:665.9px;top:860.1px;font-size:20.3px;line-height:26.4px;letter-spacing:-0.204px;">union</code>
<code class="t c k" style="left:665.9px;top:892.6px;font-size:20.3px;line-height:26.4px;letter-spacing:-0.204px;">select</code><code class="t c s" style="left:749.6px;top:892.6px;font-size:20.3px;line-height:26.4px;letter-spacing:-0.204px;">'33'</code><code class="t c k" style="left:809.5px;top:892.6px;font-size:20.3px;line-height:26.4px;letter-spacing:-0.204px;">Text</code><code class="t c pn" style="left:857.4px;top:892.6px;font-size:20.3px;line-height:26.4px;letter-spacing:-0.204px;">,</code><code class="t c s" style="left:881.3px;top:892.6px;font-size:20.3px;line-height:26.4px;letter-spacing:-0.204px;">'#00f'</code><code class="t c k" style="left:965.1px;top:892.6px;font-size:20.3px;line-height:26.4px;letter-spacing:-0.204px;">Value</code>
<code class="t c k" style="left:618.0px;top:925.0px;font-size:20.3px;line-height:26.4px;letter-spacing:-0.204px;">END</code>
</article>
<svg class="ic" style="left:1800px;top:884px" width="96" height="80" viewBox="0 0 96 80"><path d="M72.2 38.8 L72.0 46.2 L71.3 51.1 L70.3 55.2 L68.8 58.8 L66.8 62.0 L64.5 64.7 L61.7 67.0 L58.5 68.9 L54.9 70.4 L50.7 71.5 L45.7 72.1 L38.2 72.3 L30.7 72.1 L25.7 71.5 L21.5 70.4 L17.9 68.9 L14.7 67.0 L11.9 64.7 L9.6 62.0 L7.6 58.8 L6.1 55.2 L5.1 51.1 L4.4 46.2 L4.2 38.8 L4.4 31.4 L5.1 26.5 L6.1 22.4 L7.6 18.8 L9.6 15.6 L11.9 12.9 L14.7 10.6 L17.9 8.7 L21.5 7.2 L25.7 6.1 L30.7 5.5 L38.2 5.3 L45.7 5.5 L50.7 6.1 L54.9 7.2 L58.5 8.7 L61.7 10.6 L64.5 12.9 L66.8 15.6 L68.8 18.8 L70.3 22.4 L71.3 26.5 L72.0 31.4z" fill="#4170e4"/><path d="M58.7 38.6 L58.6 43.1 L58.2 46.1 L57.5 48.6 L56.6 50.8 L55.5 52.7 L54.1 54.4 L52.4 55.8 L50.5 56.9 L48.3 57.8 L45.7 58.5 L42.7 58.9 L38.2 59.0 L33.7 58.9 L30.7 58.5 L28.1 57.8 L25.9 56.9 L24.0 55.8 L22.3 54.4 L20.9 52.7 L19.8 50.8 L18.9 48.6 L18.2 46.1 L17.8 43.1 L17.7 38.6 L17.8 34.1 L18.2 31.1 L18.9 28.6 L19.8 26.4 L20.9 24.5 L22.3 22.8 L24.0 21.4 L25.9 20.3 L28.1 19.4 L30.7 18.7 L33.7 18.3 L38.2 18.2 L42.7 18.3 L45.7 18.7 L48.3 19.4 L50.5 20.3 L52.4 21.4 L54.1 22.8 L55.5 24.5 L56.6 26.4 L57.5 28.6 L58.2 31.1 L58.6 34.1z" fill="#fff"/><path d="M42 56c2 3 6 5.200 10.500 4.800-1.500-1.300-2.300-3-2.500-5.300z" fill="#fff"/><circle cx="38" cy="33.500" r="3.400" fill="#4170e4"/><circle cx="38" cy="43.700" r="3.400" fill="#4170e4"/><circle cx="62.700" cy="13.500" r="11.800" fill="#e00d1c"/></svg><span class="t" style="left:1858.8px;top:890.5px;font-size:12px;line-height:15.6px;color:#fff;font-weight:700">1</span><svg class="ic" style="left:1838px;top:962.4px" width="15.8" height="18" viewBox="0 0 448 512" ><path fill="#4a70da" d="M448 344v112a23.940 23.940 0 0 1-24 24H312c-21.390 0-32.090-25.900-17-41l36.200-36.200L224 295.600 116.770 402.900 153 439c15.090 15.100 4.390 41-17 41H24a23.940 23.940 0 0 1-24-24V344c0-21.400 25.890-32.100 41-17l36.190 36.200L184.460 256 77.180 148.700 41 185c-15.100 15.100-41 4.400-41-17V56a23.940 23.940 0 0 1 24-24h112c21.390 0 32.090 25.900 17 41l-36.200 36.200L224 216.400l107.230-107.300L295 73c-15.090-15.100-4.390-41 17-41h112a23.940 23.940 0 0 1 24 24v112c0 21.400-25.890 32.100-41 17l-36.190-36.200L263.540 256l107.280 107.300L407 327.100c15.100-15.200 41-4.500 41 16.900z"/></svg>
</body>
</html>
